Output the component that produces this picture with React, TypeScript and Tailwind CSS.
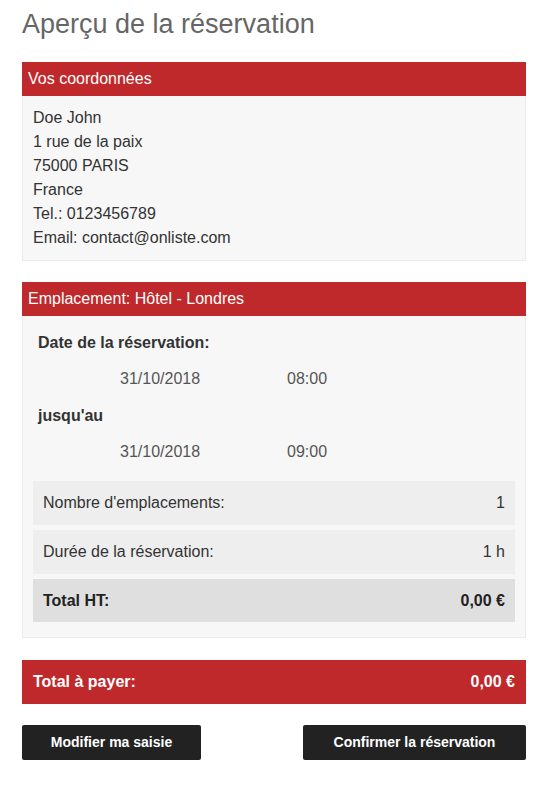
import React from "react";

const font = { fontFamily: '"Liberation Sans", Arial, sans-serif' };

export default function App() {
  return (
    <div className="w-[544px] min-h-[789px] bg-white pl-[22px] pt-[6px]" style={font}>
      <h1 className="text-[27px] leading-[36px] font-light text-[#666] mb-[20px]">Aperçu de la réservation</h1>
      <div className="w-[504px]">
        <div className="border border-[#ececec] bg-[#f7f7f7]">
          <div className="bg-[#c0292b] h-[34px] -mx-px -mt-px flex items-center px-[6px] text-[16px] text-white">
            Vos coordonnées
          </div>
          <div className="px-[10px] py-[10px] text-[16px] leading-[24px] text-[#333]">
            <div>Doe John</div>
            <div>1 rue de la paix</div>
            <div>75000 PARIS</div>
            <div>France</div>
            <div>Tel.: 0123456789</div>
            <div>Email: contact@onliste.com</div>
          </div>
        </div>

        <div className="mt-[21px] border border-[#ececec] bg-[#f7f7f7]">
          <div className="bg-[#c0292b] h-[34px] -mx-px -mt-px flex items-center px-[6px] text-[16px] text-white">
            Emplacement: Hôtel - Londres
          </div>
          <div className="px-[10px] pb-[15px] text-[16px] leading-[24px] text-[#333]">
            <div className="pt-[15px] pl-[5px] font-bold">Date de la réservation:</div>
            <div className="mt-[12px] flex text-[#555]">
              <div className="w-[254px] pl-[87px]">31/10/2018</div>
              <div>08:00</div>
            </div>
            <div className="mt-[13px] pl-[5px] font-bold">jusqu'au</div>
            <div className="mt-[12px] flex text-[#555]">
              <div className="w-[254px] pl-[87px]">31/10/2018</div>
              <div>09:00</div>
            </div>
            <div className="mt-[17px] flex flex-col gap-[5px]">
              <div className="h-[44px] bg-[#eee] flex items-center justify-between px-[10px]">
                <span>Nombre d'emplacements:</span>
                <span>1</span>
              </div>
              <div className="h-[44px] bg-[#eee] flex items-center justify-between px-[10px]">
                <span>Durée de la réservation:</span>
                <span>1 h</span>
              </div>
              <div className="h-[43px] bg-[#dfdfdf] flex items-center justify-between px-[10px] font-bold text-[#222]">
                <span>Total HT:</span>
                <span>0,00 €</span>
              </div>
            </div>
          </div>
        </div>

        <div className="mt-[22px] h-[44px] bg-[#c0292b] flex items-center justify-between px-[11px] text-[16px] font-bold text-white">
          <span>Total à payer:</span>
          <span>0,00 €</span>
        </div>

        <div className="mt-[21px] flex justify-between">
          <button className="w-[179px] h-[35px] bg-[#222] rounded-[2px] text-white text-[14px] font-bold">
            Modifier ma saisie
          </button>
          <button className="w-[223px] h-[35px] bg-[#222] rounded-[2px] text-white text-[14px] font-bold">
            Confirmer la réservation
          </button>
        </div>
      </div>
    </div>
  );
}
